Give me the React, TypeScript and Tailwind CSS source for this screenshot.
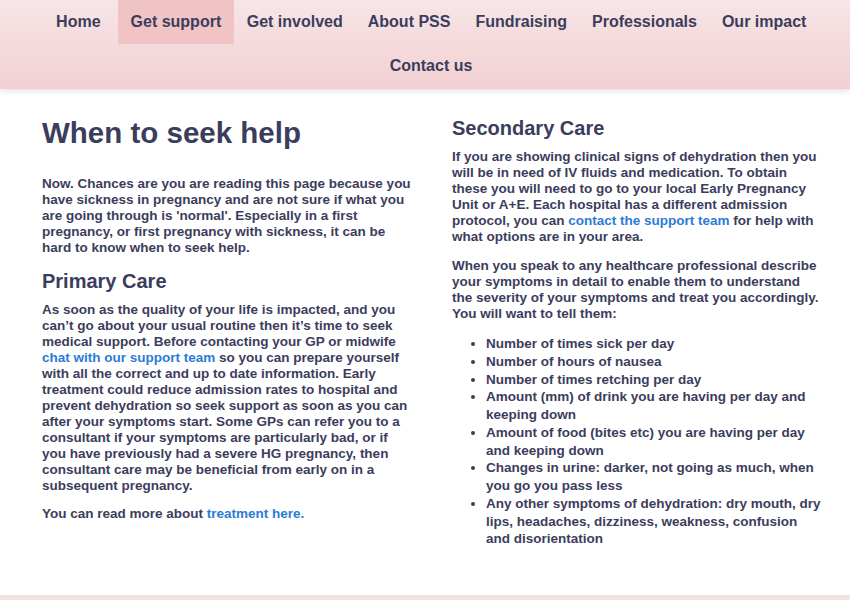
const navItems = [
  "Home",
  "Get support",
  "Get involved",
  "About PSS",
  "Fundraising",
  "Professionals",
  "Our impact",
  "Contact us",
];

const symptoms = [
  "Number of times sick per day",
  "Number of hours of nausea",
  "Number of times retching per day",
  "Amount (mm) of drink you are having per day and keeping down",
  "Amount of food (bites etc) you are having per day and keeping down",
  "Changes in urine: darker, not going as much, when you go you pass less",
  "Any other symptoms of dehydration: dry mouth, dry lips, headaches, dizziness, weakness, confusion and disorientation",
];

function Link({ children }: { children: React.ReactNode }) {
  return <a href="#" className="text-[#2c7bd5]">{children}</a>;
}

export default function App() {
  return (
    <div className="bg-white text-[#3b3d5c] font-['Liberation_Sans',Arial,sans-serif] font-bold">
      {/* Header / nav */}
      <header className="h-[89px] bg-gradient-to-b from-[#f7e5e7] to-[#f2d0d2] shadow-[0_2px_6px_rgba(0,0,0,0.12)] relative z-10">
        <nav className="flex flex-wrap justify-center pl-[12px] text-[16px]">
          {navItems.map((item) => (
            <a
              key={item}
              href="#"
              className={
                item === "Get support"
                  ? "h-[44px] flex items-center px-[13px] bg-[#f0c4c5]"
                  : item === "Home"
                  ? "h-[44px] flex items-center px-[13px] mr-[4px]"
                  : "h-[44px] flex items-center px-[12.5px]"
              }
            >
              {item}
            </a>
          ))}
        </nav>
      </header>

      {/* Content */}
      <main className="grid grid-cols-[369px_369px] gap-x-[41px] pl-[42px] pt-[27px] pb-[47px] text-[13.5px] leading-[16px]">
        <section>
          <h1 className="text-[29.5px] leading-[34px]">When to seek help</h1>
          <p className="mt-[26px]">
            Now. Chances are you are reading this page because you have sickness in pregnancy and are not sure if
            what you are going through is 'normal'. Especially in a first pregnancy, or first pregnancy with
            sickness, it can be hard to know when to seek help.
          </p>
          <h2 className="mt-[13px] text-[20px] leading-[24px]">Primary Care</h2>
          <p className="mt-[9px]">
            As soon as the quality of your life is impacted, and you can’t go about your usual routine then it’s
            time to seek medical support. Before contacting your GP or midwife{" "}
            <Link>chat with our support team</Link> so you can prepare yourself with all the correct and up to date
            information. Early treatment could reduce admission rates to hospital and prevent dehydration so seek
            support as soon as you can after your symptoms start. Some GPs can refer you to a consultant if your
            symptoms are particularly bad, or if you have previously had a severe HG pregnancy, then consultant care
            may be beneficial from early on in a subsequent pregnancy.
          </p>
          <p className="mt-[12px]">
            You can read more about <Link>treatment here.</Link>
          </p>
        </section>

        <section>
          <h2 className="text-[20px] leading-[24px]">Secondary Care</h2>
          <p className="mt-[9px]">
            If you are showing clinical signs of dehydration then you will be in need of IV fluids and medication. To
            obtain these you will need to go to your local Early Pregnancy Unit or A+E. Each hospital has a different
            admission protocol, you can <Link>contact the support team</Link> for help with what options are in your
            area.
          </p>
          <p className="mt-[13px]">
            When you speak to any healthcare professional describe your symptoms in detail to enable them to
            understand the severity of your symptoms and treat you accordingly. You will want to tell them:
          </p>
          <ul className="mt-[13px] list-disc pl-[34px] leading-[17.75px]">
            {symptoms.map((s) => (
              <li key={s}>{s}</li>
            ))}
          </ul>
        </section>
      </main>

      <footer className="h-[6px] bg-[#f3e4e4]" />
    </div>
  );
}
